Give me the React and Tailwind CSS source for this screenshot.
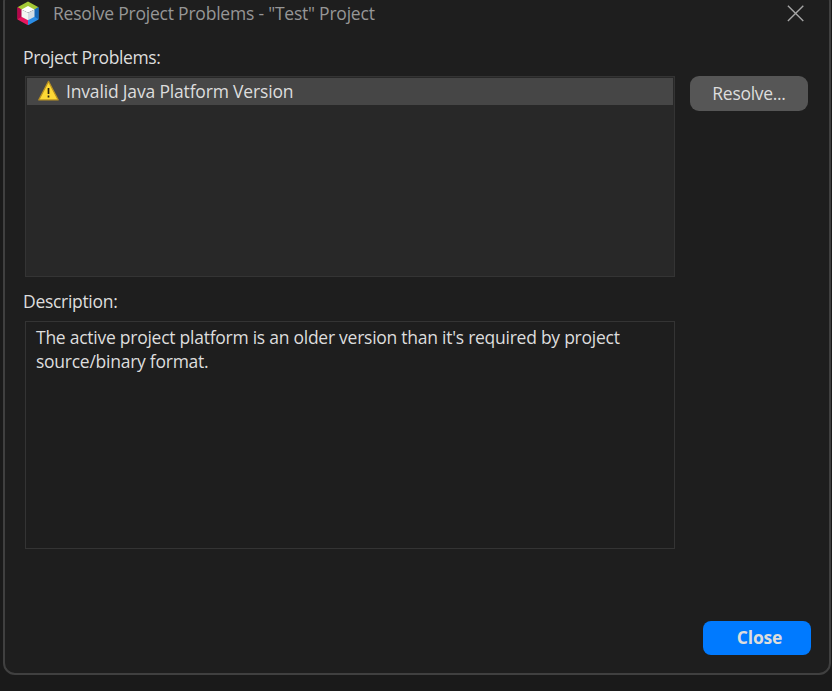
function ProjectLogo() {
  return (
    <svg className="-mt-0.5 h-6 w-[22px] shrink-0" viewBox="0 0 22 24">
      <polygon points="11,0.5 21.5,6.3 16.5,9.2 11,6 5.5,9.2 0.5,6.3" fill="#a4c936" />
      <polygon points="0.5,6.3 5.5,9.2 5.5,15.2 11,18.3 11,24.3 0.5,18.5" fill="#e8175f" />
      <polygon points="0.5,6.3 5.5,9.2 5.5,15.2 0.5,18.3" fill="#b3064b" />
      <polygon points="21.5,6.3 16.5,9.2 16.5,15.2 11,18.3 11,24.3 21.5,18.5" fill="#2b8de6" />
      <polygon points="21.5,6.3 16.5,9.2 16.5,15.2 21.5,18.3" fill="#1767b5" />
      <polygon points="11,5 17.5,8.5 11,11.8 4.5,8.5" fill="#ffffff" />
      <polygon points="4.5,8.5 11,11.8 11,19.3 4.5,15.7" fill="#f2f6f2" />
      <polygon points="17.5,8.5 11,11.8 11,19.3 17.5,15.7" fill="#d3dde4" />
    </svg>
  );
}

function WarningIcon() {
  return (
    <svg className="-mt-[2px] h-[21px] w-[22px] shrink-0" viewBox="0 0 22 21">
      <path d="M10.5 1.4 L20.2 19.9 H0.8 Z" fill="#fdd835" stroke="#b99222" strokeWidth="1.2" strokeLinejoin="round" />
      <path d="M10.5 8 V14 M10.5 15.6 V17.6" fill="none" stroke="#272010" strokeWidth="1.7" />
    </svg>
  );
}

export default function App() {
  return (
    <div className="h-[691px] w-[832px] overflow-hidden bg-[#1a1a1a] pl-[3px] font-['Open_Sans',sans-serif] text-[17.5px] text-[#dddddd]">
      <main className="-mt-2.5 flex h-[685px] w-[828px] flex-col rounded-xl border-2 border-[#404040] bg-[#1e1e1e] pt-2">
        <header className="flex h-[27px] shrink-0 items-center pl-3 text-[#969696]">
          <ProjectLogo />
          <h1 className="ml-3.5 tracking-[-0.22px] whitespace-nowrap">Resolve Project Problems - "Test" Project</h1>
          <svg className="-mt-px mr-[25px] ml-auto h-[18px] w-[18px]" viewBox="0 0 18 18">
            <path d="M1.9 1.7 L17.3 17.1 M17.3 1.7 L1.9 17.1" stroke="#a5a5a5" strokeWidth="1.4" />
          </svg>
        </header>
        <section className="flex flex-col pt-[18px] pl-5">
          <h2 className="ml-[-2px] h-6 leading-6 tracking-[-0.38px] whitespace-nowrap">Project Problems:</h2>
          <div className="mt-[7px] flex items-start gap-[15px]">
            <div className="h-[201px] w-[650px] border border-[#343434] bg-[#282828] p-px">
              <div className="flex h-[27px] items-center bg-[#464646] pl-[11px]">
                <WarningIcon />
                <span className="ml-[6px] tracking-[-0.17px] whitespace-nowrap">Invalid Java Platform Version</span>
              </div>
            </div>
            <button className="h-[35px] w-[118px] rounded-[9px] bg-[#565656] tracking-[-0.3px] whitespace-nowrap">Resolve...</button>
          </div>
          <h2 className="mt-[12px] ml-[-2px] h-6 leading-6 tracking-[-0.3px] whitespace-nowrap">Description:</h2>
          <div className="mt-[8px] h-[228px] w-[650px] border border-[#343434] pt-[3px] pl-[10px] leading-6 tracking-[-0.255px]">
            <p className="whitespace-nowrap">The active project platform is an older version than it's required by project</p>
            <p className="whitespace-nowrap">source/binary format.</p>
          </div>
        </section>
        <footer className="mt-[72px] flex justify-end pr-[18px]">
          <button className="h-[34px] w-[108px] rounded-lg bg-[#007aff] pb-0.5 pl-[5px] font-bold tracking-[-0.2px]">Close</button>
        </footer>
      </main>
    </div>
  );
}
